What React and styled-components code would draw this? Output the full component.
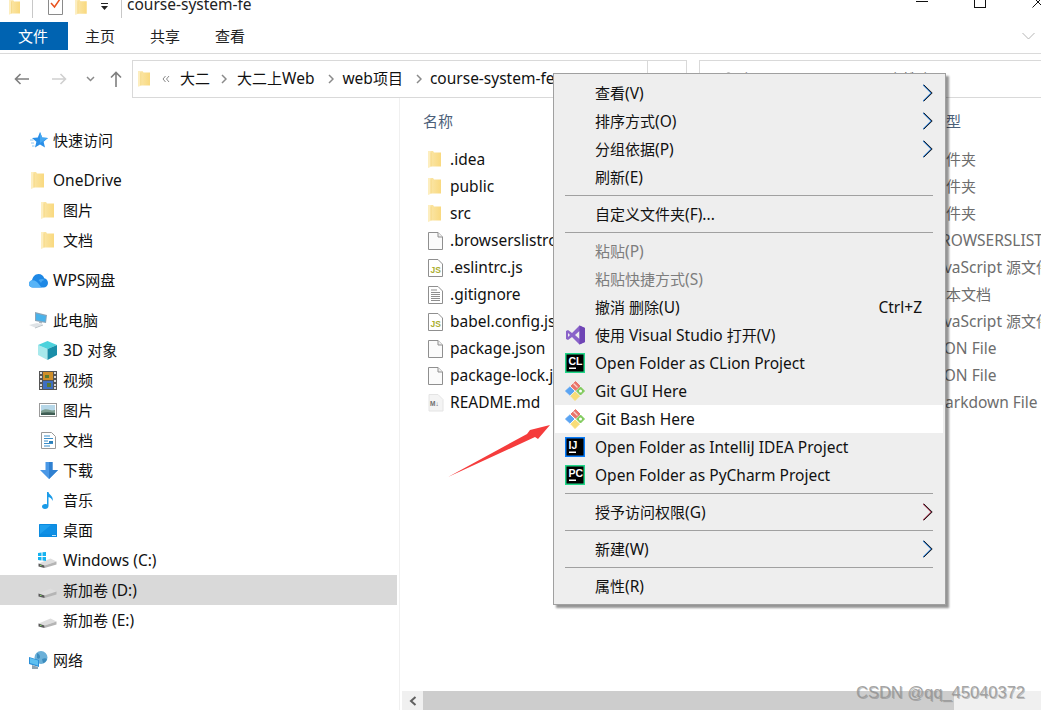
import React, { useId } from "react";
import styled, { createGlobalStyle } from "styled-components";

const Global = createGlobalStyle`
  html, body { margin: 0; padding: 0; background: #fff; }
  body { font-family: "Noto Sans", "Noto Sans CJK SC", sans-serif; font-size: 15.5px; color: #000; }
`;

const Cn = styled.span`
  font-size: 15px;
`;
/* Latin runs sit at 15.5px, CJK runs at 15px, as in the reference's mixed fonts */
const T = ({ children }) =>
  String(children)
    .split(/([\u3000-\u9fff]+)/)
    .map((s, i) => (i % 2 ? <Cn key={i}>{s}</Cn> : s));

const Window = styled.div`
  position: relative;
  width: 1041px;
  height: 710px;
  overflow: hidden;
  display: flex;
  flex-direction: column;
  background: #fff;
`;

const TitleBar = styled.header`
  height: 30px;
  margin-top: -8px;
  flex: none;
  display: flex;
  align-items: center;
  padding-left: 9px;
  gap: 12px;
`;
const TitleSep = styled.span`
  width: 1px;
  height: 22px;
  background: #c8c8c8;
`;
const TitleText = styled.span`
  font-size: 15.5px;
  line-height: 20px;
  color: #222;
  margin-top: -7px;
  margin-left: -7px;
`;
const WinControls = styled.div`
  margin-left: auto;
  display: flex;
  align-items: center;
  gap: 46px;
  margin-top: -11px;
  margin-right: -3px;
`;

const Tabs = styled.nav`
  height: 28px;
  flex: none;
  display: flex;
  align-items: stretch;
  padding-right: 4px;
`;
const Tab = styled.div`
  width: ${(p) => (p.$active ? "68px" : "65px")};
  padding-left: ${(p) => (p.$active ? "18px" : "17px")};
  box-sizing: border-box;
  background: ${(p) => (p.$active ? "#0063b1" : "transparent")};
  color: ${(p) => (p.$active ? "#fff" : "#222")};
  font-size: 15px;
  line-height: 28px;
`;
const RibbonToggle = styled.div`
  margin-left: auto;
  display: flex;
  align-items: center;
  padding-right: 2px;
`;
const RibbonLine = styled.div`
  margin-top: 3px;
  height: 1px;
  flex: none;
  background: #dadada;
`;

const AddressRow = styled.div`
  margin-top: 5px;
  height: 39px;
  flex: none;
  display: flex;
  align-items: center;
`;
const NavButtons = styled.div`
  width: 132px;
  flex: none;
  height: 100%;
  display: flex;
  align-items: center;
  padding-left: 14px;
  box-sizing: border-box;
`;
const NavSlot = styled.span`
  width: ${(p) => p.$w}px;
  display: flex;
`;
const AddressBox = styled.div`
  width: 555px;
  height: 38px;
  flex: none;
  box-sizing: border-box;
  border: 1px solid #d9d9d9;
  display: flex;
  align-items: center;
  padding-left: 5px;
  overflow: hidden;
  white-space: nowrap;
  position: relative;
`;
const Crumb = styled.span`
  color: #111;
  margin-left: ${(p) => p.$ml || 0}px;
  margin-top: -2px;
`;
const CrumbSep = styled.span`
  display: flex;
  margin-left: ${(p) => p.$ml}px;
`;
const RefreshCell = styled.div`
  position: absolute;
  right: 0;
  top: 0;
  bottom: 0;
  width: 39px;
  border-left: 1px solid #d9d9d9;
  background: #fff;
  display: flex;
  justify-content: center;
  padding-top: 12px;
  box-sizing: border-box;
`;
const SearchBox = styled.div`
  margin-left: 12px;
  flex: 1;
  height: 38px;
  box-sizing: border-box;
  border: 1px solid #d9d9d9;
  border-right: none;
  display: flex;
  align-items: center;
  padding-left: 20px;
  gap: 6px;
  color: #6d6d6d;
  white-space: nowrap;
`;

const Body = styled.div`
  flex: 1;
  min-height: 0;
  display: flex;
`;
const Sidebar = styled.aside`
  width: 399px;
  flex: none;
  border-right: 1px solid #f0f0f0;
  padding-top: 27px;
`;
const NavGroup = styled.div`
  margin-bottom: 10px;
`;
const NavRow = styled.div`
  width: 397px;
  height: 30px;
  display: flex;
  align-items: center;
  box-sizing: border-box;
  padding-left: ${(p) => (p.$level ? 38 : 29)}px;
  background: ${(p) => (p.$selected ? "#d9d9d9" : "transparent")};
  line-height: 30px;
  color: #111;
  white-space: pre;
`;
const NavIcon = styled.span`
  width: ${(p) => (p.$level ? 25 : 24)}px;
  height: 30px;
  flex: none;
  display: flex;
  align-items: center;
  padding-left: ${(p) => p.$pad || 0}px;
  box-sizing: border-box;
`;

const Main = styled.main`
  flex: 1;
  min-width: 0;
  display: flex;
  flex-direction: column;
  overflow: hidden;
`;
const FileArea = styled.div`
  flex: 1;
  min-height: 0;
  padding-top: 9px;
`;
const HeaderRow = styled.div`
  height: 28px;
  display: grid;
  grid-template-columns: 508px 1fr;
  padding-left: 23px;
  margin-bottom: 11px;
  line-height: 28px;
  color: #4c607a;
`;
const FileRow = styled.div`
  height: 27px;
  display: grid;
  grid-template-columns: 480px 1fr;
  padding-left: 28px;
  align-items: center;
  line-height: 27px;
  white-space: nowrap;
`;
const FileName = styled.div`
  display: flex;
  align-items: center;
  color: #111;
  overflow: hidden;
`;
const FileIconSlot = styled.span`
  width: 22px;
  flex: none;
  display: flex;
  align-items: center;
`;
const FileType = styled.div`
  color: #6d6d6d;
  padding-left: 23px;
  overflow: hidden;
`;

const ScrollBar = styled.div`
  height: 19px;
  flex: none;
  margin-left: 2px;
  display: flex;
  background: #f0f0f0;
`;
const ScrollBtn = styled.div`
  width: 21px;
  display: flex;
  align-items: center;
  justify-content: center;
`;
const ScrollThumb = styled.div`
  width: 531px;
  background: #cdcdcd;
`;

const Menu = styled.div`
  position: absolute;
  left: 553px;
  top: 73px;
  width: 393px;
  height: 532px;
  box-sizing: border-box;
  background: #eeeeee;
  border: 1px solid #a0a0a0;
  box-shadow: 3px 3px 2px rgba(0, 0, 0, 0.42);
  padding: 5px 2px 0 1px;
  z-index: 5;
`;
const MenuRow = styled.div`
  height: 28px;
  display: flex;
  align-items: center;
  box-sizing: border-box;
  padding-right: 10px;
  background: ${(p) => (p.$hover ? "#fff" : "transparent")};
  color: ${(p) => (p.$disabled ? "#7d7d7d" : "#111")};
  line-height: 28px;
  white-space: pre;
`;
const MenuIcon = styled.span`
  width: 30px;
  margin-left: 10px;
  flex: none;
  display: flex;
  align-items: center;
`;
const MenuEnd = styled.span`
  margin-left: auto;
  padding-right: ${(p) => (p.$text ? 11 : 0)}px;
  display: flex;
  align-items: center;
`;
const MenuSep = styled.div`
  height: 1px;
  margin: 4px 10px;
  background: #a0a0a0;
`;

const ArrowMark = styled.svg`
  position: absolute;
  left: 440px;
  top: 420px;
  z-index: 6;
`;
const Watermark = styled.div`
  position: absolute;
  left: 856px;
  top: 682px;
  z-index: 7;
  font-family: "Liberation Sans", sans-serif;
  font-size: 16.5px;
  line-height: 20px;
  color: rgba(150, 150, 150, 0.85);
  text-shadow: 1px 1px 0 rgba(90, 90, 90, 0.35);
  white-space: nowrap;
`;

/* ---------- drawn icons ---------- */
const Folder = ({ w = 13, h = 17 }) => {
  const id = useId();
  return (
    <svg width={w} height={h} viewBox="0 0 13 17">
      <defs>
        <linearGradient id={id} x1="0" x2="1" y1="0" y2="0">
          <stop offset="0" stopColor="#fbe8ae" />
          <stop offset="1" stopColor="#f9d97f" />
        </linearGradient>
      </defs>
      <path d="M0 0h5l1 1.500h7V15.500H0z" fill={`url(#${id})`} />
      <path d="M0 0h2.500v16L0 17z" fill="#fdeebf" />
      <path d="M2.500 1.500h1v14h-1z" fill="#f3cf70" opacity=".55" />
    </svg>
  );
};
const Star = () => (
  <svg width="18" height="16" viewBox="1 0 18 16">
    <path d="M11 0l2.200 5.500L19 6l-4.400 3.800L16 15.500 11 12.500 6 15.500l1.400-5.700L3 6l5.800-.5z" fill="#2a8fe8" />
    <path d="M11 0l2.200 5.500L19 6l-8 5z" fill="#45a8f2" />
    <path d="M1 8h3.500M2 11h3M3 14h2.500" stroke="#8cc8f4" strokeWidth="1" />
  </svg>
);
const Cloud = () => (
  <svg width="19" height="15" viewBox="0 0 19 15">
    <path d="M4 14.500C1.500 14.500 0 13 0 11s1.300-3.500 3-3.700C3.700 4 6 1 9.500 1c3 0 5 1.800 5.700 4.300 2 .3 3.800 2.300 3.800 4.600 0 2.700-2 4.600-4.500 4.600z" fill="#1e88e5" />
    <path d="M4 14.500C1.500 14.500 0 13 0 11s1.500-3.700 3.500-3.700c3 0 5 2 6.500 4 1 1.500 2 2.500 3 3.200z" fill="#57b4f7" />
    <path d="M9.500 7c2-1.500 5-1.500 6 0-2 .3-3 1.500-3.500 3z" fill="#57b4f7" opacity=".7" />
  </svg>
);
const Pc = () => (
  <svg width="20" height="18" viewBox="0 0 20 18">
    <path d="M6 1l12 3-1 8-11-2z" fill="#8aa4b8" />
    <path d="M7 2.500l10 2.500-.8 5.800L7 9z" fill="#49b2ea" />
    <path d="M10 10.500l3 .6v1.500l-3-.5z" fill="#aab6bf" />
    <path d="M0 14l8-2 6 1.500-8 3z" fill="#dfe3e6" />
    <path d="M6 16.500l8-3v1l-8 3z" fill="#b9c0c5" />
  </svg>
);
const Cube = () => (
  <svg width="19" height="19" viewBox="0 0 19 19">
    <path d="M0 4l9.500 4v11L0 14z" fill="#a8e9ec" />
    <path d="M9.500 0L19 4 9.500 8 0 4z" fill="#4cd2dc" />
    <path d="M9.500 8L19 4v10l-9.500 5z" fill="#1a8ea8" />
  </svg>
);
const Film = () => (
  <svg width="18" height="19" viewBox="0 0 18 19">
    <rect width="18" height="19" fill="#555" />
    <path d="M1 1h2v2H1zM1 5h2v2H1zM1 9h2v2H1zM1 13h2v2H1zM1 16h2v2H1zM15 1h2v2h-2zM15 5h2v2h-2zM15 9h2v2h-2zM15 13h2v2h-2zM15 16h2v2h-2z" fill="#ddd" />
    <rect x="4" y="1" width="10" height="8" fill="#d08f2a" />
    <rect x="4" y="10" width="10" height="8" fill="#3f6fc0" />
    <path d="M6 4h4v3H6zM8 12h4v4H8z" fill="#5a7a30" />
  </svg>
);
const Picture = () => (
  <svg width="18" height="14" viewBox="0 0 18 14">
    <rect x=".5" y=".5" width="17" height="13" fill="#fff" stroke="#9a9a9a" />
    <rect x="2" y="2" width="14" height="10" fill="#b6d7e8" />
    <path d="M2 8c3-2 6-2 9-1s3 0 5 0v5H2z" fill="#7f9f92" />
    <path d="M2 10c4-1 9-1 14 0v2H2z" fill="#3f5d54" />
  </svg>
);
const DocBlue = () => (
  <svg width="15" height="17" viewBox="0 0 15 17">
    <path d="M.5.500h10l4 4v12H.5z" fill="#fff" stroke="#9a9a9a" />
    <path d="M3 4h6M3 6.500h9M3 9h4M3 11.500h9M3 14h6" stroke="#3b8ec9" />
    <path d="M8 9h4v2H8z" fill="#2b7fb8" />
  </svg>
);
const Download = () => (
  <svg width="18" height="17" viewBox="0 0 18 17">
    <path d="M5.500 0h7v8H18l-9 9-9-9h5.500z" fill="#4a98e6" />
    <path d="M9 0h3.500v8H18l-9 9z" fill="#3080d0" />
  </svg>
);
const Music = () => (
  <svg width="12" height="17" viewBox="0 0 12 17">
    <path d="M5 0h1.500c.3 3 5.500 4 4 9-.5-2.500-2.500-3.500-4-4v9c0 1.700-1.600 3-3.500 3S0 16 0 14.500 1.500 12 3.200 12c.7 0 1.300.1 1.800.4z" fill="#1a9be8" />
  </svg>
);
const Desktop = () => (
  <svg width="18" height="13" viewBox="0 0 18 13">
    <rect width="18" height="13" rx=".5" fill="#0b8be0" />
    <path d="M1 1h16v9H1z" fill="#20a0ee" />
    <path d="M1 10L12 1h5v9z" fill="#0f8fe4" />
    <path d="M13 11h4v1h-4z" fill="#bfe4fa" />
  </svg>
);
const Drive = ({ win }) => (
  <svg width="19" height="16" viewBox="0 0 19 16">
    <g transform="translate(0.500 6.500)">
      <path d="M0 5l12-5 6 3-12 4z" fill="#dedede" />
      <path d="M6 7l12-4v3L6 9.500z" fill="#b5b5b5" />
      <path d="M0 5l6 2v2.500L0 8z" fill="#5a5a5a" />
      <rect x="1.500" y="6.500" width="1.500" height="1" fill="#7fd06a" />
    </g>
    {win && <path d="M0 1l3.500-.5V4H0zM4.500.300L8 0v4H4.500zM0 5h3.500v3.500L0 8zM4.500 5H8v4l-3.500-.5z" fill="#14b2f0" />}
  </svg>
);
const Network = () => (
  <svg width="20" height="18" viewBox="0 0 20 18">
    <circle cx="12" cy="6.500" r="6.500" fill="#6bb0d8" />
    <path d="M8 2c2 1 3 2 3 4s-2 2-3 1zM13 8c2-1 4-1 5 0-1 3-3 4-4 4z" fill="#3b8bbd" />
    <path d="M0 6l10 3v7L0 13z" fill="#2a8fd8" />
    <path d="M1 7l8 2.500v5L1 12z" fill="#5ec0f0" />
    <path d="M3 14l6 2v2H3z" fill="#8fa3b0" />
  </svg>
);
const FileBlank = () => (
  <svg width="15" height="18" viewBox="0 0 15 18">
    <path d="M.5.500h9.500l4.500 4.500v12.500H.5z" fill="#fbfbfb" stroke="#8f8f8f" />
    <path d="M10 .5v4.500h4.500" fill="#eeeeee" stroke="#8f8f8f" />
  </svg>
);
const FileLines = () => (
  <svg width="15" height="18" viewBox="0 0 15 18">
    <path d="M.5.500h9.500l4.500 4.500v12.500H.5z" fill="#fff" stroke="#8f8f8f" />
    <path d="M3 4h6M3 6.500h9M3 8.500h9M3 10.500h9M3 12.500h9M3 14.500h9" stroke="#8f8f8f" />
  </svg>
);
const JsMark = styled.text`
  font-family: "Liberation Sans", sans-serif;
  font-size: 8.500px;
  font-weight: 700;
  fill: #a9ad2e;
`;
const FileJs = () => (
  <svg width="15" height="18" viewBox="0 0 15 18">
    <path d="M.5.500h9.500l4.500 4.500v12.500H.5z" fill="#fff" stroke="#8f8f8f" />
    <JsMark x="2.500" y="13.500">JS</JsMark>
  </svg>
);
const MdMark = styled.text`
  font-family: "Liberation Sans", sans-serif;
  font-size: 6.500px;
  font-weight: 700;
  fill: #6e6e6e;
`;
const FileMd = () => (
  <svg width="16" height="18" viewBox="0 0 16 18">
    <path d="M1 .5h9l5 5v11.500H1z" fill="#f4f4f4" stroke="#e4e4e4" />
    <MdMark x="2" y="12">M↓</MdMark>
  </svg>
);
const Chevron = ({ tint = "#1c6fc9" }) => (
  <svg width="10" height="18" viewBox="0 0 10 18" fill="none">
    <path d="M.5.800L8.800 9 .5 17.200" stroke={tint} strokeWidth="1.100" transform="translate(-.4 0)" />
    <path d="M.800.800L9.200 9 .800 17.200" stroke="#111" strokeWidth=".9" />
  </svg>
);
const VsIcon = () => (
  <svg width="20" height="20" viewBox="0 0 20 20">
    <path fillRule="evenodd" d="M14.500 .5L20 3v14l-5.500 2.500L7 12 3 15l-2-1V6l2-1 4 3zM14.500 6L10 10l4.500 4zM3 8v4l2-2z" fill="#8a63c9" />
    <path fillRule="evenodd" d="M14.500 .5L20 3v14l-5.500 2.500V14V6z" fill="#6f45b5" />
  </svg>
);
const BadgeText = styled.text`
  font-family: "Liberation Sans", sans-serif;
  font-size: 10.500px;
  font-weight: 700;
  fill: #fff;
`;
const JetBadge = ({ label, edge }) => (
  <svg width="20" height="20" viewBox="0 0 20 20">
    <rect width="20" height="20" fill={edge} />
    <rect x="1.500" y="1.500" width="17" height="17" fill="#000" />
    <BadgeText x="3.500" y="11.500">{label}</BadgeText>
    <rect x="4" y="14.500" width="7" height="1.500" fill="#fff" />
  </svg>
);
const GitIcon = () => (
  <svg width="20" height="20" viewBox="0 0 20 20" strokeLinejoin="round">
    <path d="M10.500 .5l4.500 4.500-4.500 4.200L6 5z" fill="#e9746b" stroke="#e9746b" />
    <path d="M8.500 2.500l4 4" stroke="#f7d5d0" strokeWidth="1.200" />
    <path d="M4.800 6l4.200 4-4.200 4L.5 10z" fill="#5ba4f2" stroke="#5ba4f2" />
    <path d="M15.500 6l4 4-4 4-4-4z" fill="#7fca5b" stroke="#7fca5b" />
    <circle cx="15.500" cy="10" r="1.500" fill="#fff" />
    <path d="M10 11l4.500 4-4.500 4.500L5.800 15z" fill="#f8dd78" stroke="#f8dd78" />
  </svg>
);
const CrumbChevron = () => (
  <svg width="6" height="10" viewBox="0 0 6 10" fill="none">
    <path d="M1 1l4 4-4 4" stroke="#8a8a8a" strokeWidth="1.500" />
  </svg>
);

/* ---------- data ---------- */
const navGroups = [
  [{ t: "快速访问", i: <Star />, pad: 1 }],
  [
    { t: "OneDrive", i: <Folder />, pad: 2 },
    { t: "图片", i: <Folder />, level: 1, pad: 3 },
    { t: "文档", i: <Folder />, level: 1, pad: 3 },
  ],
  [{ t: "WPS网盘", i: <Cloud /> }],
  [
    { t: "此电脑", i: <Pc /> },
    { t: "3D 对象", i: <Cube />, level: 1 },
    { t: "视频", i: <Film />, level: 1, pad: 1 },
    { t: "图片", i: <Picture />, level: 1, pad: 1 },
    { t: "文档", i: <DocBlue />, level: 1, pad: 3 },
    { t: "下载", i: <Download />, level: 1, pad: 2 },
    { t: "音乐", i: <Music />, level: 1, pad: 4 },
    { t: "桌面", i: <Desktop />, level: 1, pad: 1 },
    { t: "Windows (C:)", i: <Drive win />, level: 1 },
    { t: "新加卷 (D:)", i: <Drive />, level: 1, selected: true },
    { t: "新加卷 (E:)", i: <Drive />, level: 1 },
  ],
  [{ t: "网络", i: <Network /> }],
];

const files = [
  { n: ".idea", i: <Folder />, y: "文件夹" },
  { n: "public", i: <Folder />, y: "文件夹" },
  { n: "src", i: <Folder />, y: "文件夹" },
  { n: ".browserslistrc", i: <FileBlank />, y: "BROWSERSLIST" },
  { n: ".eslintrc.js", i: <FileJs />, y: "JavaScript 源文件" },
  { n: ".gitignore", i: <FileLines />, y: "文本文档" },
  { n: "babel.config.js", i: <FileJs />, y: "JavaScript 源文件" },
  { n: "package.json", i: <FileBlank />, y: "JSON File" },
  { n: "package-lock.json", i: <FileBlank />, y: "JSON File" },
  { n: "README.md", i: <FileMd />, y: "Markdown File" },
];

const menu = [
  { t: "查看(V)", arrow: true },
  { t: "排序方式(O)", arrow: true },
  { t: "分组依据(P)", arrow: true },
  { t: "刷新(E)" },
  { sep: true },
  { t: "自定义文件夹(F)..." },
  { sep: true },
  { t: "粘贴(P)", disabled: true },
  { t: "粘贴快捷方式(S)", disabled: true },
  { t: "撤消 删除(U)", key: "Ctrl+Z" },
  { t: "使用 Visual Studio 打开(V)", icon: <VsIcon /> },
  { t: "Open Folder as CLion Project", icon: <JetBadge label="CL" edge="#21d789" /> },
  { t: "Git GUI Here", icon: <GitIcon /> },
  { t: "Git Bash Here", icon: <GitIcon />, hover: true },
  { t: "Open Folder as IntelliJ IDEA Project", icon: <JetBadge label="IJ" edge="#087cfa" /> },
  { t: "Open Folder as PyCharm Project", icon: <JetBadge label="PC" edge="#21d789" /> },
  { sep: true },
  { t: "授予访问权限(G)", arrow: true, tint: "#a0304a" },
  { sep: true },
  { t: "新建(W)", arrow: true },
  { sep: true },
  { t: "属性(R)" },
];

export default function App() {
  return (
    <Window>
      <Global />
      <TitleBar>
        <Folder w={11} h={15} />
        <TitleSep />
        <svg width="15" height="18" viewBox="0 0 15 18" style={{ marginLeft: 3 }} fill="none">
          <path d="M.5 0v16.500h14V0" stroke="#8a8a8a" fill="#fff" />
          <path d="M3 5l3.500 4L12 1" stroke="#e8531f" strokeWidth="1.500" />
        </svg>
        <Folder w={12} h={15} />
        <svg width="8" height="8" viewBox="0 0 8 8" style={{ marginLeft: 2 }}>
          <path d="M0 0h7v1H0zM0 3h7L3.500 7z" fill="#222" />
        </svg>
        <TitleSep />
        <TitleText>course-system-fe</TitleText>
        <WinControls>
          <svg width="12" height="1"><rect width="12" height="1" fill="#111" /></svg>
          <svg width="12" height="12" viewBox="0 0 12 12" fill="none"><rect x=".5" y=".5" width="11" height="11" stroke="#111" /></svg>
          <svg width="12" height="12" viewBox="0 0 12 12" fill="none"><path d="M.5.500l11 11M11.500.500l-11 11" stroke="#111" /></svg>
        </WinControls>
      </TitleBar>

      <Tabs>
        <Tab $active>文件</Tab>
        <Tab>主页</Tab>
        <Tab>共享</Tab>
        <Tab>查看</Tab>
        <RibbonToggle>
          <svg width="13" height="8" viewBox="0 0 13 8" fill="none">
            <path d="M.5 1l6 6 6-6" stroke="#b5b5b5" />
          </svg>
        </RibbonToggle>
      </Tabs>
      <RibbonLine />

      <AddressRow>
        <NavButtons>
          <NavSlot $w={38}>
            <svg width="15" height="12" viewBox="0 0 15 12" fill="none"><path d="M15 6H1.500M6.500 1L1.500 6l5 5" stroke="#7f7f7f" strokeWidth="1.600" /></svg>
          </NavSlot>
          <NavSlot $w={34}>
            <svg width="15" height="12" viewBox="0 0 15 12" fill="none"><path d="M0 6h13.500M8.500 1l5 5-5 5" stroke="#d0d0d0" strokeWidth="1.600" /></svg>
          </NavSlot>
          <NavSlot $w={24}>
            <svg width="9" height="6" viewBox="0 0 9 6" fill="none"><path d="M1 1l3.500 3.500L8 1" stroke="#8a8a8a" strokeWidth="1.500" /></svg>
          </NavSlot>
          <NavSlot $w={12}>
            <svg width="12" height="16" viewBox="0 0 12 16" fill="none"><path d="M6 16V1.500M1 6.500l5-5 5 5" stroke="#7f7f7f" strokeWidth="1.600" /></svg>
          </NavSlot>
        </NavButtons>
        <AddressBox>
          <Folder w={12} h={16} />
          <svg width="8" height="8" viewBox="0 0 8 8" fill="none" style={{ marginLeft: 12 }}>
            <path d="M3.500 1L1 4l2.500 3M7 1L4.500 4 7 7" stroke="#8a8a8a" />
          </svg>
          <Crumb $ml={10}><T>大二</T></Crumb>
          <CrumbSep $ml={11}><CrumbChevron /></CrumbSep>
          <Crumb $ml={10}><T>大二上Web</T></Crumb>
          <CrumbSep $ml={14}><CrumbChevron /></CrumbSep>
          <Crumb $ml={8}><T>web项目</T></Crumb>
          <CrumbSep $ml={13}><CrumbChevron /></CrumbSep>
          <Crumb $ml={8}>course-system-fe</Crumb>
          <RefreshCell>
            <svg width="14" height="14" viewBox="0 0 14 14" fill="none"><path d="M12 7a5 5 0 1 1-2-4l2 1" stroke="#666" /></svg>
          </RefreshCell>
        </AddressBox>
        <SearchBox>
          <svg width="14" height="14" viewBox="0 0 14 14" fill="none"><circle cx="8.500" cy="5.500" r="4.500" stroke="#777" /><path d="M5 9l-4 4" stroke="#777" /></svg>
          <span><T>在 course-system-fe 中搜索</T></span>
        </SearchBox>
      </AddressRow>

      <Body>
        <Sidebar>
          {navGroups.map((g, gi) => (
            <NavGroup key={gi}>
              {g.map((r) => (
                <NavRow key={r.t + gi} $level={r.level} $selected={r.selected}>
                  <NavIcon $level={r.level} $pad={r.pad}>{r.i}</NavIcon>
                  <span><T>{r.t}</T></span>
                </NavRow>
              ))}
            </NavGroup>
          ))}
        </Sidebar>
        <Main>
          <FileArea>
            <HeaderRow>
              <Cn>名称</Cn>
              <Cn>类型</Cn>
            </HeaderRow>
            {files.map((f) => (
              <FileRow key={f.n}>
                <FileName>
                  <FileIconSlot>{f.i}</FileIconSlot>
                  {f.n}
                </FileName>
                <FileType><T>{f.y}</T></FileType>
              </FileRow>
            ))}
          </FileArea>
          <ScrollBar>
            <ScrollBtn>
              <svg width="8" height="10" viewBox="0 0 8 10" fill="none"><path d="M6.500 1L2 5l4.500 4" stroke="#606060" strokeWidth="2" /></svg>
            </ScrollBtn>
            <ScrollThumb />
          </ScrollBar>
        </Main>
      </Body>

      <Menu>
        {menu.map((m, i) =>
          m.sep ? (
            <MenuSep key={i} />
          ) : (
            <MenuRow key={i} $hover={m.hover} $disabled={m.disabled}>
              <MenuIcon>{m.icon}</MenuIcon>
              <span><T>{m.t}</T></span>
              {m.key && <MenuEnd $text>{m.key}</MenuEnd>}
              {m.arrow && <MenuEnd><Chevron tint={m.tint} /></MenuEnd>}
            </MenuRow>
          )
        )}
      </Menu>

      <ArrowMark width="115" height="62" viewBox="0 0 115 62">
        <path d="M8 57L87 14l3-4 20-5-12 14-3-2z" fill="#f53c3c" />
      </ArrowMark>
      <Watermark>CSDN @qq_45040372</Watermark>
    </Window>
  );
}
